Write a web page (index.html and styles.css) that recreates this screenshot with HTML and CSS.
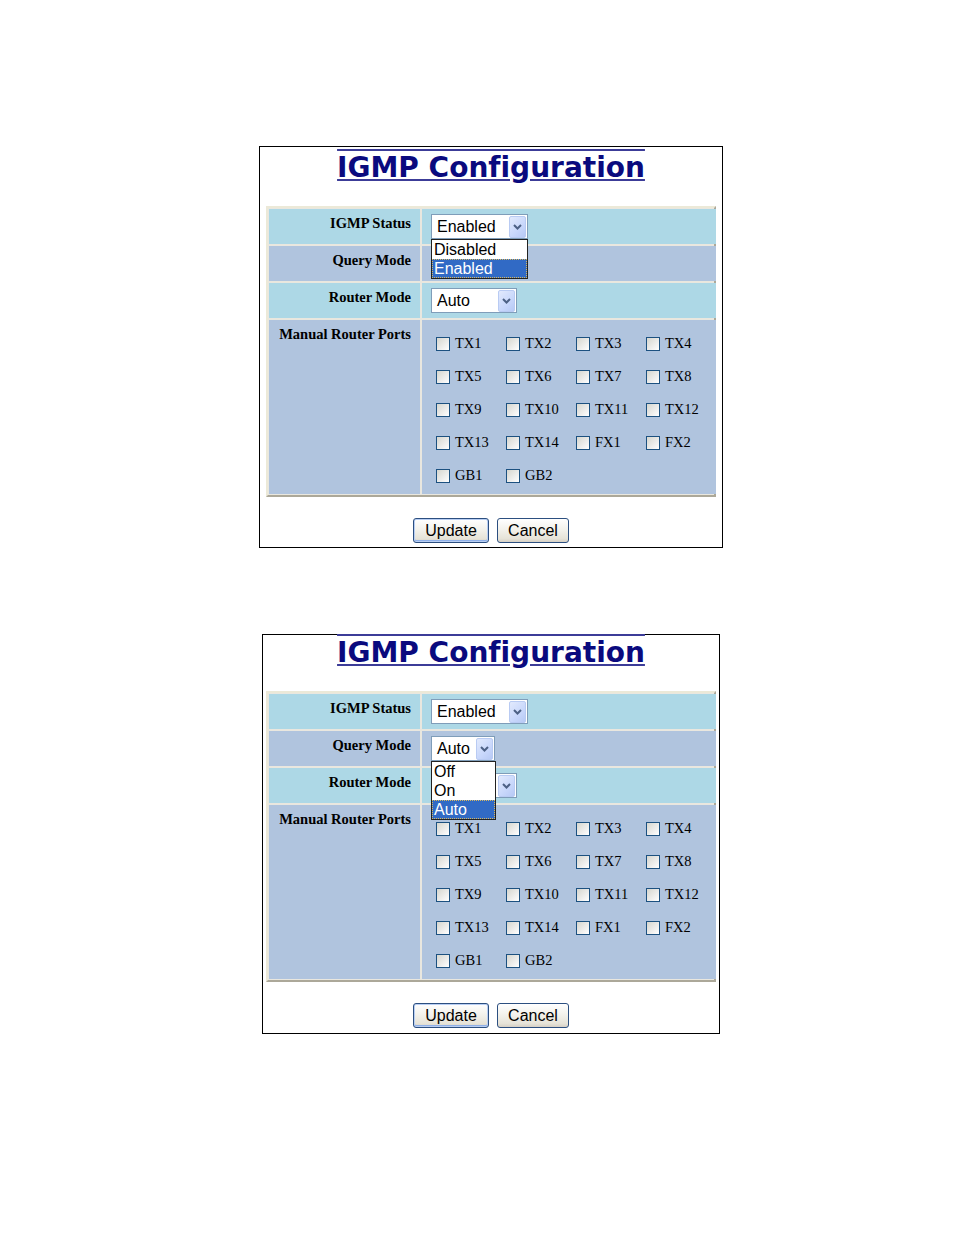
FILE: index.html
```html
<!DOCTYPE html>
<html>
<head>
<meta charset="utf-8">
<title>IGMP Configuration</title>
<link rel="stylesheet" href="styles.css">
</head>
<body>
<div class="panel panel-a">
  <div class="title"><span class="title-text">IGMP Configuration</span></div>
  <div class="cfg">
    <div class="lbl light">IGMP Status</div>
    <div class="val light">
      <div class="sel w97"><span class="sel-text">Enabled</span><span class="sel-btn"><svg width="9" height="6" viewBox="0 0 9 6"><polyline points="1,1 4.5,4.5 8,1" fill="none" stroke="#4d6185" stroke-width="2"/></svg></span>
        <div class="list w97">
          <div class="opt">Disabled</div>
          <div class="opt on">Enabled</div>
        </div>
      </div>
    </div>
    <div class="lbl steel">Query Mode</div>
    <div class="val steel">
      <div class="sel w64"><span class="sel-text">Auto</span><span class="sel-btn"><svg width="9" height="6" viewBox="0 0 9 6"><polyline points="1,1 4.5,4.5 8,1" fill="none" stroke="#4d6185" stroke-width="2"/></svg></span></div>
    </div>
    <div class="lbl light">Router Mode</div>
    <div class="val light">
      <div class="sel w86"><span class="sel-text">Auto</span><span class="sel-btn"><svg width="9" height="6" viewBox="0 0 9 6"><polyline points="1,1 4.5,4.5 8,1" fill="none" stroke="#4d6185" stroke-width="2"/></svg></span></div>
    </div>
    <div class="lbl steel">Manual Router Ports</div>
    <div class="val steel">
      <div class="ports">
        <label class="port"><span class="cb"></span>TX1</label>
        <label class="port"><span class="cb"></span>TX2</label>
        <label class="port"><span class="cb"></span>TX3</label>
        <label class="port"><span class="cb"></span>TX4</label>
        <label class="port"><span class="cb"></span>TX5</label>
        <label class="port"><span class="cb"></span>TX6</label>
        <label class="port"><span class="cb"></span>TX7</label>
        <label class="port"><span class="cb"></span>TX8</label>
        <label class="port"><span class="cb"></span>TX9</label>
        <label class="port"><span class="cb"></span>TX10</label>
        <label class="port"><span class="cb"></span>TX11</label>
        <label class="port"><span class="cb"></span>TX12</label>
        <label class="port"><span class="cb"></span>TX13</label>
        <label class="port"><span class="cb"></span>TX14</label>
        <label class="port"><span class="cb"></span>FX1</label>
        <label class="port"><span class="cb"></span>FX2</label>
        <label class="port"><span class="cb"></span>GB1</label>
        <label class="port"><span class="cb"></span>GB2</label>
      </div>
    </div>
  </div>
  <div class="actions"><span class="btn btn-default btn-update">Update</span><span class="btn btn-cancel">Cancel</span></div>
</div>

<div class="panel panel-b">
  <div class="title"><span class="title-text">IGMP Configuration</span></div>
  <div class="cfg">
    <div class="lbl light">IGMP Status</div>
    <div class="val light">
      <div class="sel w97"><span class="sel-text">Enabled</span><span class="sel-btn"><svg width="9" height="6" viewBox="0 0 9 6"><polyline points="1,1 4.5,4.5 8,1" fill="none" stroke="#4d6185" stroke-width="2"/></svg></span></div>
    </div>
    <div class="lbl steel">Query Mode</div>
    <div class="val steel">
      <div class="sel w64"><span class="sel-text">Auto</span><span class="sel-btn"><svg width="9" height="6" viewBox="0 0 9 6"><polyline points="1,1 4.5,4.5 8,1" fill="none" stroke="#4d6185" stroke-width="2"/></svg></span>
        <div class="list w65">
          <div class="opt">Off</div>
          <div class="opt">On</div>
          <div class="opt on">Auto</div>
        </div>
      </div>
    </div>
    <div class="lbl light">Router Mode</div>
    <div class="val light">
      <div class="sel w86"><span class="sel-text">Auto</span><span class="sel-btn"><svg width="9" height="6" viewBox="0 0 9 6"><polyline points="1,1 4.5,4.5 8,1" fill="none" stroke="#4d6185" stroke-width="2"/></svg></span></div>
    </div>
    <div class="lbl steel">Manual Router Ports</div>
    <div class="val steel">
      <div class="ports">
        <label class="port"><span class="cb"></span>TX1</label>
        <label class="port"><span class="cb"></span>TX2</label>
        <label class="port"><span class="cb"></span>TX3</label>
        <label class="port"><span class="cb"></span>TX4</label>
        <label class="port"><span class="cb"></span>TX5</label>
        <label class="port"><span class="cb"></span>TX6</label>
        <label class="port"><span class="cb"></span>TX7</label>
        <label class="port"><span class="cb"></span>TX8</label>
        <label class="port"><span class="cb"></span>TX9</label>
        <label class="port"><span class="cb"></span>TX10</label>
        <label class="port"><span class="cb"></span>TX11</label>
        <label class="port"><span class="cb"></span>TX12</label>
        <label class="port"><span class="cb"></span>TX13</label>
        <label class="port"><span class="cb"></span>TX14</label>
        <label class="port"><span class="cb"></span>FX1</label>
        <label class="port"><span class="cb"></span>FX2</label>
        <label class="port"><span class="cb"></span>GB1</label>
        <label class="port"><span class="cb"></span>GB2</label>
      </div>
    </div>
  </div>
  <div class="actions"><span class="btn btn-default btn-update">Update</span><span class="btn btn-cancel">Cancel</span></div>
</div>
</body>
</html>
```

FILE: styles.css
```css
html, body {
  margin: 0;
  padding: 0;
  background: #ffffff;
}
body {
  padding-top: 146px;
  font-family: "Liberation Serif", "Times New Roman", serif;
  color: #000;
}
.panel {
  border: 1px solid #000;
  box-sizing: border-box;
}
.panel-a {
  width: 464px;
  margin-left: 259px;
  padding-bottom: 4px;
}
.panel-b {
  width: 458px;
  margin-left: 262px;
  margin-top: 86px;
  padding-bottom: 5px;
}
.title {
  height: 59px;
  box-sizing: border-box;
  padding-top: 3px;
  text-align: center;
}
.panel-b .title {
  height: 56px;
  padding-top: 0;
}
.title-text {
  font-family: "DejaVu Sans", Verdana, sans-serif;
  font-weight: bold;
  font-size: 28px;
  line-height: 36px;
  color: #0a0a7e;
  font-variant-ligatures: none;
  font-feature-settings: "liga" 0, "clig" 0;
  text-decoration: underline overline;
  text-decoration-color: #3c3c98;
}
.cfg {
  width: 450px;
  box-sizing: border-box;
  margin: 0 auto;
  display: grid;
  grid-template-columns: 151px 1fr;
  grid-template-rows: 35px 35px 35px 174px;
  gap: 2px;
  padding: 1px;
  border: 2px solid;
  border-color: #ece9d8 #aca899 #aca899 #ece9d8;
  background: #e9e7df;
}
.light { background: #add8e6; }
.steel { background: #b0c4de; }
.lbl {
  font-weight: bold;
  font-size: 14.5px;
  line-height: 17px;
  text-align: right;
  padding: 6px 9px 0 0;
  white-space: nowrap;
}
.val {
  padding: 5px 0 0 9px;
}
.sel {
  position: relative;
  box-sizing: border-box;
  height: 25px;
  border: 1px solid #7f9db9;
  background: #fff;
  display: flex;
  align-items: stretch;
  font-family: "Liberation Sans", Arial, sans-serif;
  font-size: 16px;
}
.w97 { width: 97px; }
.w86 { width: 86px; }
.w64 { width: 64px; }
.sel-text {
  flex: 1;
  padding-left: 5px;
  line-height: 24px;
}
.sel-btn {
  width: 17px;
  margin: 1px 1px 0 0;
  box-sizing: border-box;
  border: 1px solid #b9cbf3;
  border-radius: 2px;
  background: linear-gradient(135deg, #e2eafd 0%, #c8d7fb 60%, #b7c9f5 100%);
  display: flex;
  align-items: center;
  justify-content: center;
}
.list {
  position: absolute;
  z-index: 10;
  left: -1px;
  top: 24px;
  box-sizing: border-box;
  border: 1px solid #222;
  background: #fff;
}
.list.w97 { width: 97px; }
.list.w65 { width: 65px; }
.opt {
  height: 19px;
  line-height: 19px;
  padding-left: 2px;
  box-sizing: border-box;
  white-space: nowrap;
}
.opt.on {
  background: #316ac5;
  color: #fff;
  outline: 1px dotted #d8b860;
  outline-offset: -1px;
}
.ports {
  display: grid;
  grid-template-columns: repeat(4, 70px);
  grid-auto-rows: 33px;
  padding: 2px 0 0 5px;
}
.port {
  display: flex;
  align-items: center;
  gap: 5px;
  font-size: 14.5px;
  white-space: nowrap;
}
.cb {
  width: 14px;
  height: 14px;
  box-sizing: border-box;
  border: 1px solid #1c5180;
  background: linear-gradient(135deg, #d6d6ce 0%, #ececea 55%, #ffffff 100%);
  flex: none;
}
.actions {
  margin-top: 21px;
  display: flex;
  justify-content: center;
  gap: 8px;
}
.btn {
  box-sizing: border-box;
  height: 25px;
  border: 1px solid #2c4f80;
  border-radius: 3px;
  background: linear-gradient(#ffffff 0%, #f3f2ec 45%, #e6e3d8 85%, #d6d0c5 100%);
  font-family: "Liberation Sans", Arial, sans-serif;
  font-size: 16px;
  line-height: 23px;
  text-align: center;
  color: #000;
}
.btn-default {
  box-shadow: inset 0 0 0 1px #b8cef3, inset 0 -1px 0 1px #8fb0e8;
}
.btn-update { width: 76px; }
.btn-cancel { width: 72px; }
```
